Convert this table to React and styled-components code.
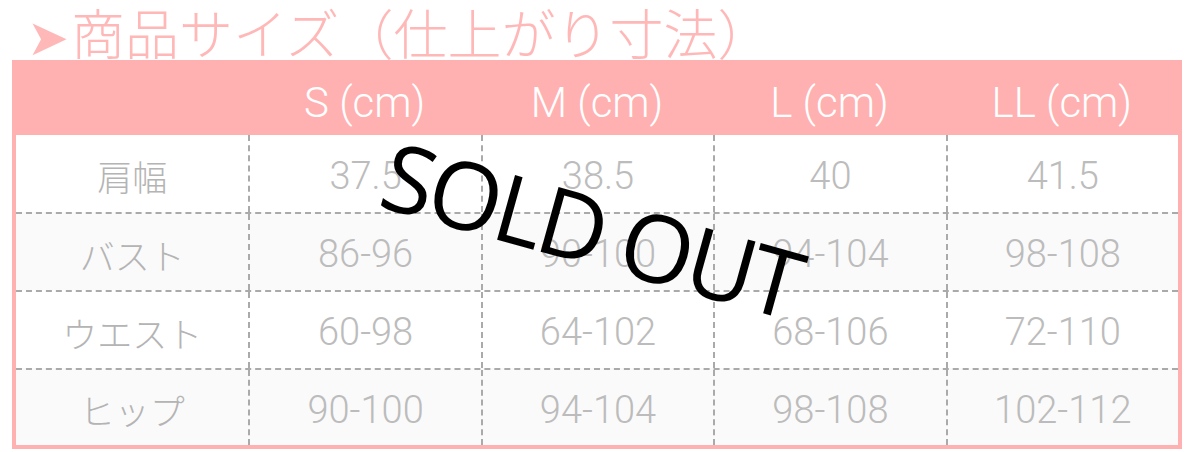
import React from "react";
import styled, { createGlobalStyle } from "styled-components";

const GlobalStyle = createGlobalStyle`
  html, body {
    margin: 0;
    padding: 0;
    background: #ffffff;
  }
  body {
    font-family: Roboto, "Noto Sans CJK JP", sans-serif;
  }
`;

const pink = "#ffb1b1";

const Page = styled.div`
  position: relative;
  width: 1200px;
  height: 452px;
  padding-left: 12px;
  box-sizing: border-box;
  overflow: hidden;
`;

const Title = styled.h2`
  margin: 0;
  padding-top: 4px;
  padding-left: 15px;
  font-family: "Noto Sans CJK JP", sans-serif;
  font-weight: 300;
  font-size: 54px;
  line-height: 56px;
  color: #ffb8b8;
  white-space: nowrap;
`;

const Arrow = styled.span`
  font-family: "DejaVu Sans", sans-serif;
  font-size: 50px;
  line-height: 0;
  margin-right: 2px;
`;

const Table = styled.div`
  width: 1170px;
  box-sizing: border-box;
  border: 4px solid ${pink};
`;

const Row = styled.div`
  display: grid;
  grid-template-columns: repeat(5, 1fr);
  height: ${(p) => p.$h}px;
  box-sizing: border-box;
  background: ${(p) => (p.$head ? pink : p.$shade ? "#fafafa" : "#ffffff")};
  border-top: ${(p) => (p.$divided ? "2px dashed #aaaaaa" : "none")};
`;

const HeadCell = styled.div`
  display: flex;
  align-items: center;
  justify-content: center;
  padding-top: 6px;
  color: #ffffff;
  font-family: Roboto, sans-serif;
  font-weight: 300;
  font-size: 42px;
`;

const Cell = styled.div`
  display: flex;
  align-items: center;
  justify-content: center;
  padding-top: 4px;
  color: ${(p) => (p.$label ? "#b4b4b4" : "#bcbcbc")};
  font-family: ${(p) =>
    p.$label ? '"Noto Sans CJK JP", sans-serif' : "Roboto, sans-serif"};
  font-weight: 300;
  font-size: ${(p) => (p.$label ? 35 : 38)}px;
  border-left: ${(p) => (p.$first ? "none" : "2px dashed #aaaaaa")};
`;

const SoldOut = styled.div`
  position: absolute;
  left: 398px;
  top: 126px;
  font-family: "Open Sans", sans-serif;
  font-weight: 400;
  font-size: 94px;
  line-height: 1;
  color: #000000;
  white-space: nowrap;
  transform: rotate(15.5deg);
  transform-origin: left top;
  letter-spacing: -4px;
`;

const sizes = ["S (cm)", "M (cm)", "L (cm)", "LL (cm)"];

const rows = [
  { label: "肩幅", values: ["37.5", "38.5", "40", "41.5"] },
  { label: "バスト", values: ["86-96", "90-100", "94-104", "98-108"] },
  { label: "ウエスト", values: ["60-98", "64-102", "68-106", "72-110"] },
  { label: "ヒップ", values: ["90-100", "94-104", "98-108", "102-112"] },
];

const heights = [77, 78, 78, 77];

export default function App() {
  return (
    <Page>
      <GlobalStyle />
      <Title>
        <Arrow>➤</Arrow>商品サイズ（仕上がり寸法）
      </Title>
      <Table>
        <Row $head $h={71}>
          <HeadCell />
          {sizes.map((s) => (
            <HeadCell key={s}>{s}</HeadCell>
          ))}
        </Row>
        {rows.map((r, i) => (
          <Row key={r.label} $h={heights[i]} $shade={i % 2 === 1} $divided={i > 0}>
            <Cell $label $first>
              {r.label}
            </Cell>
            {r.values.map((v, j) => (
              <Cell key={j}>{v}</Cell>
            ))}
          </Row>
        ))}
      </Table>
      <SoldOut>SOLD OUT</SoldOut>
    </Page>
  );
}
